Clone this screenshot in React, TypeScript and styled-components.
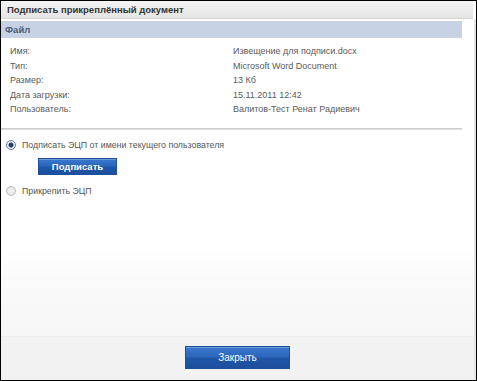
import React from 'react';
import styled, { createGlobalStyle } from 'styled-components';

const GlobalStyle = createGlobalStyle`
  html, body {
    margin: 0;
    padding: 0;
    background: #ffffff;
  }
  body {
    font-family: "Liberation Sans", Arial, sans-serif;
  }
`;

const Frame = styled.div`
  width: 477px;
  height: 381px;
  box-sizing: border-box;
  border: 1px solid #000;
  display: flex;
  flex-direction: column;
  background: #fff;
  overflow: hidden;
`;

const TitleBar = styled.div`
  height: 17px;
  padding-left: 6px;
  display: flex;
  align-items: center;
  background: linear-gradient(#f4f4f4, #e4e4e4);
  border-bottom: 1px solid #d6d6d6;
  margin-right: 3px;
  font-size: 9.5px;
  font-weight: bold;
  color: #333;
`;

const Body = styled.div`
  flex: 1;
  display: flex;
  flex-direction: column;
  background: linear-gradient(#ffffff 0, #ffffff 230px, #fafafa 260px, #f7f7f7 100%);
  border-right: 2px solid #e4e4e4;
`;

const SectionHeader = styled.div`
  margin-top: 2px;
  margin-right: 12px;
  height: 17px;
  padding-left: 4px;
  display: flex;
  align-items: center;
  background: #c7d3e5;
  font-size: 9.5px;
  font-weight: bold;
  color: #4d5d78;
`;

const InfoGrid = styled.div`
  display: grid;
  grid-template-columns: 223px 1fr;
  row-gap: 3px;
  padding: 8px 0 0 9px;
  font-size: 9px;
  color: #5a5a5a;
  line-height: 11.5px;
`;

const Divider = styled.div`
  margin: 12px 12px 0 0;
  height: 2px;
  background: linear-gradient(#c4c4c4, #e8e8e8);
`;

const Options = styled.div`
  display: flex;
  flex-direction: column;
  padding: 9px 0 0 5px;
`;

const RadioRow = styled.label`
  display: flex;
  align-items: center;
  gap: 6px;
  font-size: 8.8px;
  color: #555;
  height: 13px;
`;

const Radio = styled.span<{ checked?: boolean }>`
  width: 8px;
  height: 8px;
  border-radius: 50%;
  border: 1px solid ${(p) => (p.checked ? '#6b7d97' : '#b8bcc4')};
  background: ${(p) =>
    p.checked
      ? 'radial-gradient(circle, #24344f 0, #2e4468 2px, #e8ecf2 3px, #f4f6f8 100%)'
      : 'radial-gradient(circle, #f4f4f4 0, #dfe1e5 100%)'};
`;

const BlueButton = styled.button<{ wide?: boolean }>`
  border: 1px solid #1d4f9a;
  background: linear-gradient(#3b79cf 0, #2c66bd 45%, #1f56a8 55%, #1c4f9c 100%);
  color: #fff;
  font-family: "Liberation Sans", Arial, sans-serif;
  font-size: ${(p) => (p.wide ? '10px' : '9.5px')};
  font-weight: ${(p) => (p.wide ? 'normal' : 'bold')};
  width: ${(p) => (p.wide ? '105px' : '79px')};
  height: ${(p) => (p.wide ? '23px' : '17px')};
  padding: 0;
  box-shadow: inset 0 1px 0 rgba(255, 255, 255, 0.25);
`;

const SignButtonRow = styled.div`
  padding: 4px 0 10px 32px;
`;

const Footer = styled.div`
  height: 44px;
  display: flex;
  justify-content: center;
  padding-top: 9px;
  box-sizing: border-box;
  background: #f2f2f2;
  border-top: 1px solid #ececec;
  border-right: 2px solid #e4e4e4;
`;

const fileInfo: [string, string][] = [
  ['Имя:', 'Извещение для подписи.docx'],
  ['Тип:', 'Microsoft Word Document'],
  ['Размер:', '13 Кб'],
  ['Дата загрузки:', '15.11.2011 12:42'],
  ['Пользователь:', 'Валитов-Тест Ренат Радиевич'],
];

export default function App() {
  return (
    <>
      <GlobalStyle />
      <Frame>
        <TitleBar>Подписать прикреплённый документ</TitleBar>
        <Body>
          <SectionHeader>Файл</SectionHeader>
          <InfoGrid>
            {fileInfo.map(([label, value]) => (
              <React.Fragment key={label}>
                <span>{label}</span>
                <span>{value}</span>
              </React.Fragment>
            ))}
          </InfoGrid>
          <Divider />
          <Options>
            <RadioRow>
              <Radio checked />
              Подписать ЭЦП от имени текущего пользователя
            </RadioRow>
            <SignButtonRow>
              <BlueButton>Подписать</BlueButton>
            </SignButtonRow>
            <RadioRow>
              <Radio />
              Прикрепить ЭЦП
            </RadioRow>
          </Options>
        </Body>
        <Footer>
          <BlueButton wide>Закрыть</BlueButton>
        </Footer>
      </Frame>
    </>
  );
}
